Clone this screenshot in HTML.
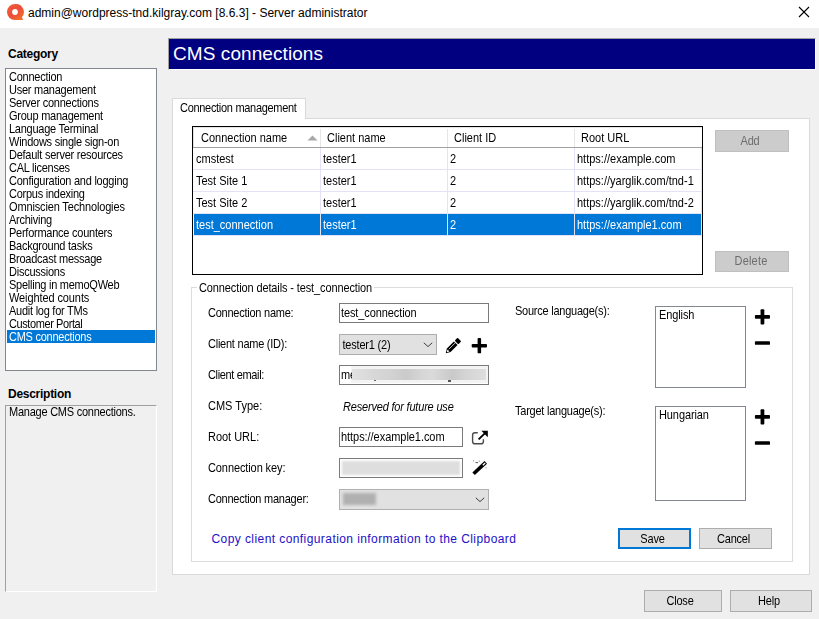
<!DOCTYPE html>
<html><head><meta charset="utf-8">
<style>
*{box-sizing:border-box;margin:0;padding:0}
html,body{width:819px;height:619px;overflow:hidden;background:#f0f0f0;font-family:"Liberation Sans",sans-serif;font-size:11px;color:#000}
.a{position:absolute}
.t{position:absolute;white-space:nowrap;line-height:11px;font-size:11px;letter-spacing:-0.24px}
#title{left:0;top:0;width:819px;height:28px;background:#fff}
.box{position:absolute;border:1px solid #828790;background:#fff}
.btn{position:absolute;border:1px solid #adadad;background:#e1e1e1;text-align:center;line-height:19px;font-size:11px;letter-spacing:-0.2px}
.sy{transform:scaleY(1.12);transform-origin:0 9.3px}
.inp{position:absolute;border:1px solid #7a7a7a;background:#fff}
.combo{position:absolute;border:1px solid #adadad;background:#e1e1e1}
</style></head><body>
<!-- title bar -->
<div id="title" class="a"></div>
<svg class="a" style="left:6px;top:3px" width="18" height="18" viewBox="0 0 18 18"><defs><linearGradient id="ig" x1="0" y1="0" x2="1" y2="1"><stop offset="0" stop-color="#f0643a"/><stop offset="0.5" stop-color="#ec4c38"/><stop offset="1" stop-color="#f47a2c"/></linearGradient></defs>
  <path d="M9 1A8 8 0 1 0 9 17L17.2 17 15.9 14.2A8 8 0 0 0 9 1Z" fill="url(#ig)"/>
  <path d="M4.5 3.3Q9 4 10.5 8.5L14 13Q9 13 6.5 8Z" fill="#ee4438" opacity="0.5"/>
  <circle cx="9" cy="9" r="2.9" fill="#fff"/>
</svg>
<div class="t" style="left:28px;top:7px;font-size:12px;line-height:12px;letter-spacing:0">admin@wordpress-tnd.kilgray.com [8.6.3] - Server administrator</div>
<svg class="a" style="left:798px;top:6px" width="12" height="12" viewBox="0 0 12 12"><path d="M1 1L11 11M11 1L1 11" stroke="#000" stroke-width="1.1"/></svg>

<!-- left -->
<div class="t" style="left:8px;top:49px;font-weight:bold;font-size:12px;letter-spacing:-0.27px">Category</div>
<div class="box" style="left:5px;top:68px;width:152px;height:303px"></div>
<div class="a" style="left:7px;top:330px;width:148px;height:13px;background:#0078d7"></div>
<div class="t sy" style="left:9px;top:72px;letter-spacing:-0.25px">Connection</div>
<div class="t sy" style="left:9px;top:85px;letter-spacing:-0.25px">User management</div>
<div class="t sy" style="left:9px;top:98px;letter-spacing:-0.25px">Server connections</div>
<div class="t sy" style="left:9px;top:111px;letter-spacing:-0.25px">Group management</div>
<div class="t sy" style="left:9px;top:124px;letter-spacing:-0.25px">Language Terminal</div>
<div class="t sy" style="left:9px;top:137px;letter-spacing:-0.25px">Windows single sign-on</div>
<div class="t sy" style="left:9px;top:150px;letter-spacing:-0.25px">Default server resources</div>
<div class="t sy" style="left:9px;top:163px;letter-spacing:-0.25px">CAL licenses</div>
<div class="t sy" style="left:9px;top:176px;letter-spacing:-0.25px">Configuration and logging</div>
<div class="t sy" style="left:9px;top:189px;letter-spacing:-0.25px">Corpus indexing</div>
<div class="t sy" style="left:9px;top:202px;letter-spacing:-0.15px">Omniscien Technologies</div>
<div class="t sy" style="left:9px;top:215px;letter-spacing:-0.25px">Archiving</div>
<div class="t sy" style="left:9px;top:228px;letter-spacing:-0.25px">Performance counters</div>
<div class="t sy" style="left:9px;top:241px;letter-spacing:-0.25px">Background tasks</div>
<div class="t sy" style="left:9px;top:254px;letter-spacing:-0.25px">Broadcast message</div>
<div class="t sy" style="left:9px;top:267px;letter-spacing:-0.25px">Discussions</div>
<div class="t sy" style="left:9px;top:280px;letter-spacing:-0.25px">Spelling in memoQWeb</div>
<div class="t sy" style="left:9px;top:293px;letter-spacing:-0.1px">Weighted counts</div>
<div class="t sy" style="left:9px;top:306px;letter-spacing:-0.25px">Audit log for TMs</div>
<div class="t sy" style="left:9px;top:319px;letter-spacing:-0.41px">Customer Portal</div>
<div class="t sy" style="left:9px;top:332px;letter-spacing:-0.25px"><span style="color:#fff">CMS connections</span></div>
<div class="t" style="left:8px;top:389px;font-weight:bold;font-size:12px;letter-spacing:-0.27px">Description</div>
<div class="a" style="left:5px;top:405px;width:152px;height:187px;border:1px solid #a0a0a0;border-right-color:#fff;border-bottom-color:#fff;background:#f0f0f0"></div>
<div class="t sy" style="left:9px;top:407px">Manage CMS connections.</div>

<!-- header -->
<div class="a" style="left:168px;top:38px;width:648px;height:32px;border-top:1px solid #a0a0a0;border-left:1px solid #a0a0a0;border-bottom:1px solid #fff;border-right:1px solid #fff;background:#000080"></div>
<div class="t" style="left:173px;top:44px;font-size:19px;line-height:19px;color:#fff;letter-spacing:0.08px">CMS connections</div>

<!-- tab -->
<div class="a" style="left:172px;top:98px;width:134px;height:21px;border:1px solid #d9d9d9;border-bottom:none;background:#fff"></div>
<div class="a" style="left:172px;top:118px;width:638px;height:457px;border:1px solid #d9d9d9;background:#fff"></div>
<div class="a" style="left:173px;top:118px;width:132px;height:1px;background:#fff"></div>
<div class="t sy" style="left:180px;top:102.6px;letter-spacing:-0.3px">Connection management</div>

<!-- grid -->
<div id="grid" class="a" style="left:192px;top:126px;width:511px;height:149px;border:1px solid #000;background:#fff"></div>
<!-- header row -->
<div class="a" style="left:193px;top:127px;width:509px;height:20px;background:#fff;border-left:1px solid #e3e3e3;border-top:1px solid #e6e6e6"></div>
<div class="a" style="left:193px;top:147px;width:509px;height:1px;background:#a0a0a0"></div>
<div class="a" style="left:320px;top:129px;width:1px;height:18px;background:#e5e5e5"></div>
<div class="a" style="left:447px;top:129px;width:1px;height:18px;background:#e5e5e5"></div>
<div class="a" style="left:574px;top:129px;width:1px;height:18px;background:#e5e5e5"></div>
<svg class="a" style="left:307px;top:135px" width="11" height="6" viewBox="0 0 11 6"><path d="M0.5 5.5L5.5 0.5L10.5 5.5Z" fill="#a8a8a8"/></svg>
<div class="t sy" style="left:201px;top:133px;letter-spacing:0">Connection name</div>
<div class="t sy" style="left:327px;top:133px;letter-spacing:0">Client name</div>
<div class="t sy" style="left:454px;top:133px;letter-spacing:0">Client ID</div>
<div class="t sy" style="left:581px;top:133px;letter-spacing:0">Root URL</div>
<!-- rows -->
<div class="a" style="left:193px;top:169px;width:509px;height:1px;background:#e3e3f8"></div>
<div class="a" style="left:193px;top:191px;width:509px;height:1px;background:#e3e3f8"></div>
<div class="a" style="left:193px;top:213px;width:509px;height:1px;background:#e3e3f8"></div>
<div class="a" style="left:193px;top:235px;width:509px;height:1px;background:#e3e3f8"></div>
<div class="a" style="left:320px;top:148px;width:1px;height:87px;background:#e3e3f8"></div>
<div class="a" style="left:447px;top:148px;width:1px;height:87px;background:#e3e3f8"></div>
<div class="a" style="left:574px;top:148px;width:1px;height:87px;background:#e3e3f8"></div>
<div class="a" style="left:701px;top:148px;width:1px;height:87px;background:#e3e3f8"></div>
<div class="a" style="left:194px;top:214px;width:126px;height:21px;background:#0078d7"></div>
<div class="a" style="left:321px;top:214px;width:126px;height:21px;background:#0078d7"></div>
<div class="a" style="left:448px;top:214px;width:126px;height:21px;background:#0078d7"></div>
<div class="a" style="left:575px;top:214px;width:126px;height:21px;background:#0078d7"></div>
<div class="t sy" style="left:196px;top:154px;letter-spacing:0">cmstest</div>
<div class="t sy" style="left:323px;top:154px;letter-spacing:0">tester1</div>
<div class="t sy" style="left:450px;top:154px;letter-spacing:0">2</div>
<div class="t sy" style="left:577px;top:154px;letter-spacing:0">https://example.com</div>
<div class="t sy" style="left:196px;top:176px;letter-spacing:0">Test Site 1</div>
<div class="t sy" style="left:323px;top:176px;letter-spacing:0">tester1</div>
<div class="t sy" style="left:450px;top:176px;letter-spacing:0">2</div>
<div class="t sy" style="left:577px;top:176px;letter-spacing:0">https://yarglik.com/tnd-1</div>
<div class="t sy" style="left:196px;top:198px;letter-spacing:0">Test Site 2</div>
<div class="t sy" style="left:323px;top:198px;letter-spacing:0">tester1</div>
<div class="t sy" style="left:450px;top:198px;letter-spacing:0">2</div>
<div class="t sy" style="left:577px;top:198px;letter-spacing:0">https://yarglik.com/tnd-2</div>
<div class="t sy" style="left:196px;top:220px;letter-spacing:0;color:#fff">test_connection</div>
<div class="t sy" style="left:323px;top:220px;letter-spacing:0;color:#fff">tester1</div>
<div class="t sy" style="left:450px;top:220px;letter-spacing:0;color:#fff">2</div>
<div class="t sy" style="left:577px;top:220px;letter-spacing:0;color:#fff">https://example1.com</div>

<!-- Add / Delete -->
<div class="btn" style="left:715px;top:130px;width:74px;height:22px;background:#cccccc;border-color:#bfbfbf;color:#6d6d6d;line-height:20px;text-indent:-2px"><span style="display:inline-block;transform:scaleY(1.12);transform-origin:0 13.81px">Add</span></div>
<div class="btn" style="left:715px;top:251px;width:74px;height:21px;background:#cccccc;border-color:#bfbfbf;color:#6d6d6d;letter-spacing:0.2px;text-indent:-1px"><span style="display:inline-block;transform:scaleY(1.12);transform-origin:0 13.31px">Delete</span></div>

<!-- group box -->
<div class="a" style="left:191px;top:287px;width:602px;height:275px;border:1px solid #dcdcdc"></div>
<div class="t sy" style="left:197px;top:283px;background:#fff;padding:0 2px;letter-spacing:-0.12px">Connection details - test_connection</div>


<!-- form labels -->
<div class="t sy" style="left:208px;top:308px">Connection name:</div>
<div class="t sy" style="left:208px;top:339px">Client name (ID):</div>
<div class="t sy" style="left:208px;top:370px;letter-spacing:-0.35px">Client email:</div>
<div class="t sy" style="left:208px;top:401px;letter-spacing:0px">CMS Type:</div>
<div class="t sy" style="left:208px;top:432px;letter-spacing:-0.02px">Root URL:</div>
<div class="t sy" style="left:208px;top:463px;letter-spacing:-0.1px">Connection key:</div>
<div class="t sy" style="left:208px;top:494px">Connection manager:</div>
<!-- inputs -->
<div class="inp" style="left:339px;top:303px;width:150px;height:20px"></div>
<div class="t sy" style="left:341px;top:308px;letter-spacing:-0.1px">test_connection</div>
<div class="combo" style="left:339px;top:334px;width:98px;height:21px"></div>
<div class="t sy" style="left:342.5px;top:340px;letter-spacing:-0.2px">tester1 (2)</div>
<svg class="a" style="left:423px;top:342px" width="10" height="6" viewBox="0 0 10 6"><path d="M0.8 0.8L5 4.6L9.2 0.8" fill="none" stroke="#3c3c3c" stroke-width="1"/></svg>
<!-- pencil -->
<svg class="a" style="left:443px;top:335px" width="22" height="22" viewBox="0 0 22 22"><g transform="translate(2.8 18.2) rotate(-45) scale(0.9)">
<path d="M0 0L4.6 -2.9H15.6V2.9H4.6Z" fill="#000"/>
<path d="M1.6 0L4.2 -1.6V1.6Z" fill="#fff"/>
<path d="M5.5 -0.7H15.2" stroke="#fff" stroke-width="0.8"/>
<rect x="16.8" y="-2.9" width="4.6" height="5.8" rx="1" fill="#000"/>
</g></svg>
<!-- plus -->

<div class="inp" style="left:339px;top:365px;width:150px;height:20px"></div>
<div class="a" style="left:351px;top:366px;width:137px;height:17px;background:#f3f3f3"></div>
<div class="t sy" style="left:341px;top:370px;letter-spacing:-0.1px">me</div>
<div class="a" style="left:374px;top:379.5px;width:1.5px;height:1.5px;background:#666"></div>
<div class="a" style="left:448px;top:379.5px;width:3px;height:2px;background:#555"></div>
<div class="a" style="left:352px;top:368.5px;width:134px;height:11px;background:linear-gradient(90deg,#e2e2e2,#d8d8d8 15%,#d2d2d2 30%,#cacaca 40%,#d6d6d6 52%,#dadada 60%,#c9c9c9 75%,#d4d4d4 85%,#dedede)"></div>
<div class="t sy" style="left:343px;top:402px;font-style:italic;letter-spacing:-0.19px">Reserved for future use</div>
<div class="inp" style="left:339px;top:427px;width:124px;height:20px"></div>
<div class="t sy" style="left:341px;top:432px;letter-spacing:-0.05px">https://example1.com</div>
<!-- external link -->
<svg class="a" style="left:470px;top:429px" width="20" height="17" viewBox="0 0 20 17"><path d="M7.8 3.8H5Q2.6 3.8 2.6 6.2V12.4Q2.6 14.8 5 14.8H11Q13.4 14.8 13.4 12.4V10.2" fill="none" stroke="#4a4a4a" stroke-width="1.4"/><path d="M8.6 10.4L14.8 4.4" stroke="#000" stroke-width="1.9"/><path d="M11.4 1.8H17.8V8.2Z" fill="#000"/></svg>
<div class="inp" style="left:339px;top:458px;width:124px;height:20px"></div>
<div class="a" style="left:342px;top:461px;width:118px;height:14px;background:#dedede;filter:blur(1px)"></div>
<!-- magic wand -->
<svg class="a" style="left:470px;top:458px" width="20" height="20" viewBox="0 0 20 20"><path d="M3.6 15.8L15.8 4.4" stroke="#000" stroke-width="3.6"/><path d="M12.8 7.2L15.2 5" stroke="#fff" stroke-width="1.3"/><circle cx="3.5" cy="2.8" r="0.6" fill="#888"/><circle cx="9.2" cy="3.2" r="0.6" fill="#888"/><path d="M5.5 4.6H8" stroke="#444" stroke-width="0.9"/><circle cx="16" cy="9.8" r="0.6" fill="#888"/></svg>
<div class="combo" style="left:339px;top:489px;width:150px;height:21px;background:#e1e1e1;border-color:#b0b0b0"></div>
<div class="a" style="left:343px;top:493px;width:33px;height:12px;background:#b0b0b0;filter:blur(1.5px)"></div>
<svg class="a" style="left:475px;top:497px" width="10" height="6" viewBox="0 0 10 6"><path d="M0.8 0.8L5 4.6L9.2 0.8" fill="none" stroke="#3c3c3c" stroke-width="1"/></svg>
<!-- languages -->
<div class="t sy" style="left:515px;top:306px">Source language(s):</div>
<div class="inp" style="left:655px;top:306px;width:91px;height:82px;border-color:#828790"></div>
<div class="t sy" style="left:659px;top:310px;letter-spacing:-0.1px">English</div>
<div class="t sy" style="left:515px;top:406px">Target language(s):</div>
<div class="inp" style="left:655px;top:406px;width:91px;height:95px;border-color:#828790"></div>
<div class="t sy" style="left:659px;top:410px;letter-spacing:-0.1px">Hungarian</div>
<svg class="a" style="left:0;top:0" width="819" height="619" viewBox="0 0 819 619"><rect x="760.57" y="309.3" width="3.75" height="15.1" rx="0.9" fill="#000"/><rect x="754.9" y="314.98" width="15.1" height="3.75" rx="0.9" fill="#000"/><rect x="760.57" y="409.3" width="3.75" height="15.1" rx="0.9" fill="#000"/><rect x="754.9" y="414.98" width="15.1" height="3.75" rx="0.9" fill="#000"/><rect x="477.60" y="338" width="3.5" height="15.3" rx="0.9" fill="#000"/><rect x="471.7" y="343.90" width="15.3" height="3.5" rx="0.9" fill="#000"/><rect x="754.9" y="341.2" width="15.1" height="3.6" rx="0.9" fill="#000"/><rect x="754.9" y="441.2" width="15.1" height="3.6" rx="0.9" fill="#000"/></svg>
<!-- link -->
<div class="t" style="left:211.5px;top:533px;font-size:12px;line-height:12px;color:#2410c8;letter-spacing:0.42px">Copy client configuration information to the Clipboard</div>
<!-- Save/Cancel/Close/Help -->
<div class="btn" style="left:618px;top:528px;width:73px;height:21px;border:2px solid #0078d7;line-height:18px;text-indent:-2px"><span style="display:inline-block;transform:scaleY(1.12);transform-origin:0 12.81px">Save</span></div>
<div class="btn" style="left:699px;top:528px;width:73px;height:21px;line-height:20px;text-indent:-2px"><span style="display:inline-block;transform:scaleY(1.12);transform-origin:0 13.81px">Cancel</span></div>
<div class="btn" style="left:644px;top:590px;width:78px;height:22px;line-height:20px;text-indent:-3px"><span style="display:inline-block;transform:scaleY(1.12);transform-origin:0 13.81px">Close</span></div>
<div class="btn" style="left:730px;top:590px;width:82px;height:22px;line-height:20px;text-indent:-2px"><span style="display:inline-block;transform:scaleY(1.12);transform-origin:0 13.81px">Help</span></div>
</body></html>
